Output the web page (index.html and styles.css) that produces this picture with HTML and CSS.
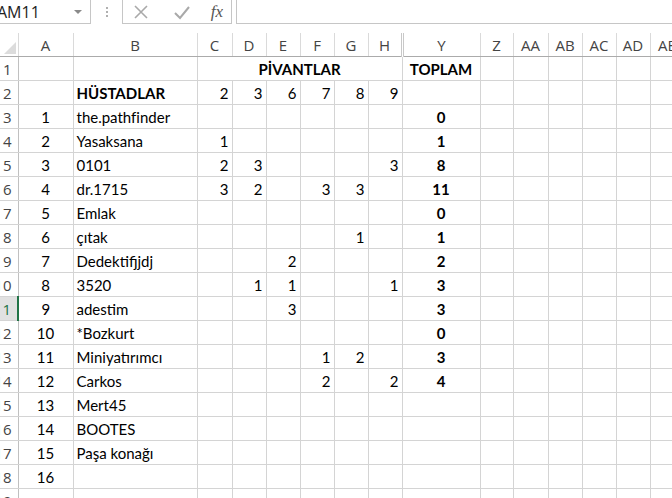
FILE: index.html
```html
<!DOCTYPE html>
<html lang="tr">
<head>
    <meta charset="UTF-8">
    <title>PİVANTLAR</title>
    <link rel="stylesheet" href="styles.css">
</head>
<body>
<div class="toolbar">
    <div class="namebox">
        <span class="name">AM11</span>
        <span class="arrow"></span>
    </div>
    <div class="dots"><span></span><span></span><span></span></div>
    <div class="fxbuttons">
        <svg width="26" height="22" viewBox="0 0 26 22"><path d="M7 5 L19 17 M19 5 L7 17" stroke="#a9a9a9" stroke-width="1.6" fill="none"/></svg>
        <svg width="26" height="22" viewBox="0 0 26 22"><path d="M6 12 L11 17 L20 6" stroke="#a9a9a9" stroke-width="2" fill="none"/></svg>
        <span class="fx">fx</span>
    </div>
    <div class="formula"></div>
</div>

<div class="grid">
<table class="sheet">
    <colgroup>
        <col class="w-rh"><col class="w-a"><col class="w-b">
        <col class="w-c"><col class="w-n"><col class="w-n"><col class="w-n"><col class="w-n"><col class="w-n">
        <col class="w-y"><col class="w-z"><col class="w-aa"><col class="w-n"><col class="w-n"><col class="w-n"><col class="w-n">
    </colgroup>
    <thead>
    <tr>
        <th class="corner"><span class="tri"></span></th>
        <th>A</th><th>B</th><th>C</th><th>D</th><th>E</th><th>F</th><th>G</th><th class="hidden-after">H</th>
        <th>Y</th><th>Z</th><th>AA</th><th>AB</th><th>AC</th><th>AD</th><th>AE</th>
    </tr>
    </thead>
    <tbody>
    <tr><td class="rh"><span>1</span></td><td></td><td></td><td colspan="6" class="bold center">PİVANTLAR</td><td class="bold center">TOPLAM</td><td></td><td></td><td></td><td></td><td></td><td></td></tr>
    <tr><td class="rh"><span>2</span></td><td></td><td class="bold">HÜSTADLAR</td><td class="num">2</td><td class="num">3</td><td class="num">6</td><td class="num">7</td><td class="num">8</td><td class="num">9</td><td></td><td></td><td></td><td></td><td></td><td></td><td></td></tr>
    <tr><td class="rh"><span>3</span></td><td class="center">1</td><td>the.pathfinder</td><td></td><td></td><td></td><td></td><td></td><td></td><td class="bold center">0</td><td></td><td></td><td></td><td></td><td></td><td></td></tr>
    <tr><td class="rh"><span>4</span></td><td class="center">2</td><td>Yasaksana</td><td class="num">1</td><td></td><td></td><td></td><td></td><td></td><td class="bold center">1</td><td></td><td></td><td></td><td></td><td></td><td></td></tr>
    <tr><td class="rh"><span>5</span></td><td class="center">3</td><td>0101</td><td class="num">2</td><td class="num">3</td><td></td><td></td><td></td><td class="num">3</td><td class="bold center">8</td><td></td><td></td><td></td><td></td><td></td><td></td></tr>
    <tr><td class="rh"><span>6</span></td><td class="center">4</td><td>dr.1715</td><td class="num">3</td><td class="num">2</td><td></td><td class="num">3</td><td class="num">3</td><td></td><td class="bold center">11</td><td></td><td></td><td></td><td></td><td></td><td></td></tr>
    <tr><td class="rh"><span>7</span></td><td class="center">5</td><td>Emlak</td><td></td><td></td><td></td><td></td><td></td><td></td><td class="bold center">0</td><td></td><td></td><td></td><td></td><td></td><td></td></tr>
    <tr><td class="rh"><span>8</span></td><td class="center">6</td><td>çıtak</td><td></td><td></td><td></td><td></td><td class="num">1</td><td></td><td class="bold center">1</td><td></td><td></td><td></td><td></td><td></td><td></td></tr>
    <tr><td class="rh"><span>9</span></td><td class="center">7</td><td>Dedektifjjdj</td><td></td><td></td><td class="num">2</td><td></td><td></td><td></td><td class="bold center">2</td><td></td><td></td><td></td><td></td><td></td><td></td></tr>
    <tr><td class="rh"><span>10</span></td><td class="center">8</td><td>3520</td><td></td><td class="num">1</td><td class="num">1</td><td></td><td></td><td class="num">1</td><td class="bold center">3</td><td></td><td></td><td></td><td></td><td></td><td></td></tr>
    <tr><td class="rh selected"><span>11</span></td><td class="center">9</td><td>adestim</td><td></td><td></td><td class="num">3</td><td></td><td></td><td></td><td class="bold center">3</td><td></td><td></td><td></td><td></td><td></td><td></td></tr>
    <tr><td class="rh"><span>12</span></td><td class="center">10</td><td>*Bozkurt</td><td></td><td></td><td></td><td></td><td></td><td></td><td class="bold center">0</td><td></td><td></td><td></td><td></td><td></td><td></td></tr>
    <tr><td class="rh"><span>13</span></td><td class="center">11</td><td>Miniyatırımcı</td><td></td><td></td><td></td><td class="num">1</td><td class="num">2</td><td></td><td class="bold center">3</td><td></td><td></td><td></td><td></td><td></td><td></td></tr>
    <tr><td class="rh"><span>14</span></td><td class="center">12</td><td>Carkos</td><td></td><td></td><td></td><td class="num">2</td><td></td><td class="num">2</td><td class="bold center">4</td><td></td><td></td><td></td><td></td><td></td><td></td></tr>
    <tr><td class="rh"><span>15</span></td><td class="center">13</td><td>Mert45</td><td></td><td></td><td></td><td></td><td></td><td></td><td></td><td></td><td></td><td></td><td></td><td></td><td></td></tr>
    <tr><td class="rh"><span>16</span></td><td class="center">14</td><td>BOOTES</td><td></td><td></td><td></td><td></td><td></td><td></td><td></td><td></td><td></td><td></td><td></td><td></td><td></td></tr>
    <tr><td class="rh"><span>17</span></td><td class="center">15</td><td>Paşa konağı</td><td></td><td></td><td></td><td></td><td></td><td></td><td></td><td></td><td></td><td></td><td></td><td></td><td></td></tr>
    <tr><td class="rh"><span>18</span></td><td class="center">16</td><td></td><td></td><td></td><td></td><td></td><td></td><td></td><td></td><td></td><td></td><td></td><td></td><td></td><td></td></tr>
    <tr><td class="rh"><span>19</span></td><td></td><td></td><td></td><td></td><td></td><td></td><td></td><td></td><td></td><td></td><td></td><td></td><td></td><td></td><td></td></tr>
    </tbody>
</table>
</div>
</body>
</html>
```

FILE: styles.css
```css
body {
    margin: 0;
    background: #ffffff;
    width: 672px;
    height: 498px;
    overflow: hidden;
    font-family: "Open Sans", "Noto Sans", sans-serif;
}

/* formula bar */
.toolbar {
    display: flex;
    align-items: stretch;
    height: 24px;
    margin-bottom: 9px;
}

.namebox {
    width: 91px;
    box-sizing: border-box;
    border: 1px solid #c6c6c6;
    border-top: none;
    border-left: none;
    display: flex;
    align-items: center;
    justify-content: space-between;
    padding-right: 8px;
    overflow: hidden;
}

.name {
    font-size: 16px;
    color: #222;
    text-indent: -3px;
    white-space: nowrap;
}

.arrow {
    width: 0;
    height: 0;
    border-left: 4px solid transparent;
    border-right: 4px solid transparent;
    border-top: 4px solid #8a8a8a;
}

.dots {
    width: 31px;
    display: flex;
    flex-direction: column;
    align-items: center;
    justify-content: center;
    gap: 2px;
}

.dots span {
    width: 2px;
    height: 2px;
    background: #b0b0b0;
}

.fxbuttons {
    width: 110px;
    box-sizing: border-box;
    border: 1px solid #c6c6c6;
    border-top: none;
    display: flex;
    align-items: center;
    justify-content: space-between;
    padding: 0 8px 0 5px;
}

.fx {
    font-family: "Liberation Serif", serif;
    font-style: italic;
    font-size: 17px;
    color: #555;
}

.formula {
    flex: 1;
    margin-left: 4px;
    border: 1px solid #c6c6c6;
    border-top: none;
    border-right: none;
}

/* sheet */
.grid {
    overflow: hidden;
}

.sheet {
    table-layout: fixed;
    border-collapse: collapse;
    width: 684px;
    font-family: Lato, "Liberation Sans", sans-serif;
    font-size: 15px;
    color: #000;
}

.w-rh { width: 18px; }
.w-a { width: 55px; }
.w-b { width: 124px; }
.w-c { width: 35px; }
.w-n { width: 34px; }
.w-y { width: 78px; }
.w-z { width: 33px; }
.w-aa { width: 35px; }

th {
    height: 23px;
    padding: 0;
    font-weight: normal;
    font-size: 15px;
    font-family: "Open Sans", "Noto Sans", sans-serif;
    color: #444;
    border-right: 1px solid #dadada;
    border-bottom: 1px solid #ababab;
    text-align: center;
}

th.hidden-after {
    border-right: 3px double #c8c8c8;
}

th.corner {
    position: relative;
    border-right: 1px solid #dadada;
}

.tri {
    position: absolute;
    right: 2px;
    bottom: 2px;
    width: 0;
    height: 0;
    border-left: 12px solid transparent;
    border-bottom: 12px solid #dcdcdc;
}

td {
    height: 23px;
    padding: 0 3px;
    border: 1px solid #d4d4d4;
    white-space: nowrap;
    overflow: hidden;
}

td.rh {
    border-left: none;
    border-right: 1px solid #c0c0c0;
    border-bottom: 1px solid #d4d4d4;
    padding: 0 6px 0 0;
    text-align: right;
    font-family: "Open Sans", "Noto Sans", sans-serif;
    font-size: 15px;
    color: #444;
    overflow: hidden;
    direction: rtl;
}

td.rh span {
    direction: ltr;
    unicode-bidi: embed;
}

td.selected {
    background: #e1e1e1;
    color: #217346;
    border-right: 2px solid #217346;
}

.bold {
    font-weight: bold;
}

.center {
    text-align: center;
}

.num {
    text-align: right;
}
```
